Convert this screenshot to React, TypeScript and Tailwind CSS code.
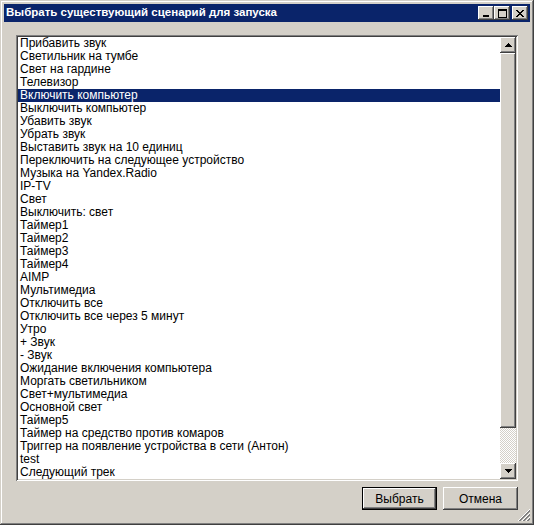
import React, { useState } from 'react';

const items = [
  'Прибавить звук',
  'Светильник на тумбе',
  'Свет на гардине',
  'Телевизор',
  'Включить компьютер',
  'Выключить компьютер',
  'Убавить звук',
  'Убрать звук',
  'Выставить звук на 10 единиц',
  'Переключить на следующее устройство',
  'Музыка на Yandex.Radio',
  'IP-TV',
  'Свет',
  'Выключить: свет',
  'Таймер1',
  'Таймер2',
  'Таймер3',
  'Таймер4',
  'AIMP',
  'Мультимедиа',
  'Отключить все',
  'Отключить все через 5 минут',
  'Утро',
  '+ Звук',
  '- Звук',
  'Ожидание включения компьютера',
  'Моргать светильником',
  'Свет+мультимедиа',
  'Основной свет',
  'Таймер5',
  'Таймер на средство против комаров',
  'Триггер на появление устройства в сети (Антон)',
  'test',
  'Следующий трек',
];

// classic 3d borders
const raised =
  'shadow-[inset_-1px_-1px_#404040,inset_1px_1px_#ffffff,inset_-2px_-2px_#808080,inset_2px_2px_#d4d0c8]';
const sunken =
  'shadow-[inset_1px_1px_#808080,inset_-1px_-1px_#ffffff,inset_2px_2px_#404040,inset_-2px_-2px_#d4d0c8]';

const CaptionButton: React.FC<{ children: React.ReactNode }> = ({ children }) => (
  <div className={`w-4 h-[14px] bg-[#d4d0c8] flex items-center justify-center ${raised}`}>
    {children}
  </div>
);

const ScrollButton: React.FC<{ up?: boolean }> = ({ up }) => (
  <div className={`w-4 h-4 bg-[#d4d0c8] flex items-center justify-center shrink-0 ${raised}`}>
    <svg width="7" height="4" viewBox="0 0 7 4" shapeRendering="crispEdges">
      {up ? (
        <>
          <rect x="3" y="0" width="1" height="1" fill="#000" />
          <rect x="2" y="1" width="3" height="1" fill="#000" />
          <rect x="1" y="2" width="5" height="1" fill="#000" />
          <rect x="0" y="3" width="7" height="1" fill="#000" />
        </>
      ) : (
        <>
          <rect x="0" y="0" width="7" height="1" fill="#000" />
          <rect x="1" y="1" width="5" height="1" fill="#000" />
          <rect x="2" y="2" width="3" height="1" fill="#000" />
          <rect x="3" y="3" width="1" height="1" fill="#000" />
        </>
      )}
    </svg>
  </div>
);

const App: React.FC = () => {
  const [selected, setSelected] = useState(4);
  const font = { fontFamily: '"Liberation Sans", Arial, sans-serif' };

  return (
    <div
      className={`w-[534px] h-[525px] bg-[#d4d0c8] p-1 flex flex-col relative shadow-[inset_-1px_-1px_#404040,inset_1px_1px_#d4d0c8,inset_-2px_-2px_#808080,inset_2px_2px_#ffffff]`}
      style={font}
    >
      {/* title bar */}
      <div className="h-[18px] bg-[#0a246a] flex items-center pl-[2px] pr-[2px] shrink-0">
        <span className="text-white font-bold text-[11.5px] leading-none flex-1 whitespace-nowrap">
          Выбрать существующий сценарий для запуска
        </span>
        <div className="flex items-center">
          <CaptionButton>
            <svg width="8" height="7" viewBox="0 0 8 7" shapeRendering="crispEdges">
              <rect x="1" y="5" width="6" height="2" fill="#000" />
            </svg>
          </CaptionButton>
          <CaptionButton>
            <svg width="9" height="9" viewBox="0 0 9 9" shapeRendering="crispEdges">
              <rect x="0" y="0" width="9" height="2" fill="#000" />
              <rect x="0" y="0" width="1" height="9" fill="#000" />
              <rect x="8" y="0" width="1" height="9" fill="#000" />
              <rect x="0" y="8" width="9" height="1" fill="#000" />
            </svg>
          </CaptionButton>
          <div className="w-[2px]" />
          <CaptionButton>
            <svg width="8" height="7" viewBox="0 0 8 7" shapeRendering="crispEdges">
              <path d="M0 0h2v1h-2zM6 0h2v1h-2zM1 1h2v1h-2zM5 1h2v1h-2zM2 2h4v1h-4zM3 3h2v1h-2zM2 4h4v1h-4zM1 5h2v1h-2zM5 5h2v1h-2zM0 6h2v1h-2zM6 6h2v1h-2z" fill="#000" />
            </svg>
          </CaptionButton>
        </div>
      </div>

      {/* client area */}
      <div className="flex-1 flex flex-col px-3 pt-[13px] pb-[9px]">
        <div className={`bg-white p-[2px] flex ${sunken}`}>
          <ul className="flex-1 flex flex-col">
            {items.map((it, i) => (
              <li
                key={it}
                onClick={() => setSelected(i)}
                className={`h-[13px] leading-[13px] text-[12px] px-[2px] whitespace-nowrap overflow-hidden ${
                  i === selected ? 'bg-[#0a246a] text-white' : 'text-black'
                }`}
              >
                {it}
              </li>
            ))}
          </ul>
          <div className="w-4 flex flex-col">
            <ScrollButton up />
            <div className="flex-1 flex flex-col bg-[repeating-conic-gradient(#d4d0c8_0_25%,#ffffff_0_50%)] bg-[length:2px_2px]">
              <div className={`h-[375px] bg-[#d4d0c8] ${raised}`} />
            </div>
            <ScrollButton />
          </div>
        </div>

        <div className="flex justify-end gap-[6px] mt-[6px]">
          <button className="w-[75px] h-[23px] border border-black bg-[#d4d0c8] p-0">
            <div className={`w-full h-full flex items-center justify-center text-[12px] text-black ${raised}`}>
              Выбрать
            </div>
          </button>
          <button
            className={`w-[75px] h-[23px] bg-[#d4d0c8] flex items-center justify-center text-[12px] text-black ${raised}`}
          >
            Отмена
          </button>
        </div>
      </div>

      {/* size grip */}
      <svg
        className="absolute right-[4px] bottom-[4px]"
        width="12"
        height="12"
        viewBox="0 0 12 12"
        shapeRendering="crispEdges"
      >
        {[0, 4, 8].map((o) => (
          <g key={o}>
            {Array.from({ length: 12 - o }).map((_, k) => (
              <React.Fragment key={k}>
                <rect x={o + k} y={11 - k} width="1" height="1" fill="#ffffff" />
                <rect x={o + k + 1} y={11 - k} width="1" height="1" fill="#808080" />
                <rect x={o + k + 2} y={11 - k} width="1" height="1" fill="#808080" />
              </React.Fragment>
            ))}
          </g>
        ))}
      </svg>
    </div>
  );
};

export default App;
